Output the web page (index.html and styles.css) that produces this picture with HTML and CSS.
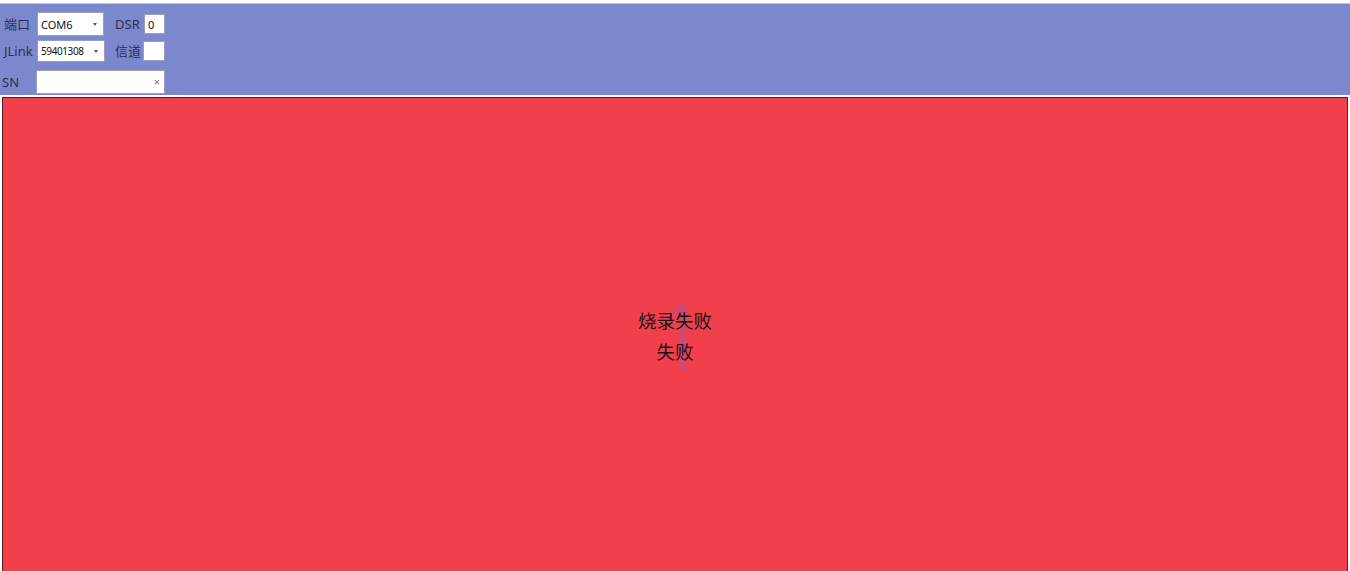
FILE: index.html
```html
<!DOCTYPE html>
<html lang="zh">
<head>
<meta charset="utf-8">
<title>烧录</title>
<link rel="stylesheet" href="styles.css">
</head>
<body>
<div class="topline"></div>
<div class="toolbar">
  <div class="grid">
    <span class="lbl">端口</span>
    <div class="combo c1"><span class="val">COM6</span><span class="arrow"></span></div>
    <span class="lbl l2">DSR</span>
    <div class="box b1"><span class="val">0</span></div>

    <span class="lbl">JLink</span>
    <div class="combo c2"><span class="val small">59401308</span><span class="arrow"></span></div>
    <span class="lbl l2">信道</span>
    <div class="box b2"></div>
  </div>
  <div class="snrow">
    <span class="lbl sn">SN</span>
    <div class="sninput"><span class="clear">×</span></div>
  </div>
</div>
<div class="panel">
  <div class="msg">
    <span class="mark" aria-hidden="true">1</span>
    <div class="text">烧录失败<br>失败</div>
  </div>
</div>
</body>
</html>
```
FILE: styles.css
```css
html, body {
  margin: 0;
  padding: 0;
  height: 100%;
  overflow: hidden;
  background: #ffffff;
  font-family: "Noto Sans", "Noto Sans CJK SC", sans-serif;
}
.topline {
  height: 3px;
  border-bottom: 1px solid #9fd9ee;
  background: #ffffff;
}
.toolbar {
  background: #7b88cd;
  height: 91px;
  box-sizing: border-box;
  padding-top: 8px;
}
.grid {
  display: grid;
  grid-template-columns: 33px 67px 11px 29px 22px;
  grid-template-rows: 24px 22px;
  row-gap: 4px;
  margin-left: 4px;
  align-items: center;
}
.lbl {
  font-size: 13px;
  color: #2b3052;
  white-space: nowrap;
  line-height: 18px;
}
.grid .lbl.l2 {
  grid-column: 4;
}
.grid .combo { grid-column: 2; }
.grid .box { grid-column: 5; }
.combo, .box, .sninput {
  background: #ffffff;
  border: 1px solid #9a9fb8;
  box-sizing: border-box;
  display: flex;
  align-items: center;
  position: relative;
}
.combo { height: 100%; padding-left: 3px; }
.c1 { width: 67px; }
.c2 { width: 68px; }
.val {
  font-size: 11px;
  color: #111111;
  font-family: "Noto Sans", sans-serif;
}
.val.small {
  font-size: 10px;
  letter-spacing: -0.4px;
}
.arrow {
  position: absolute;
  right: 6px;
  top: 50%;
  margin-top: -1px;
  width: 0;
  height: 0;
  border-left: 2px solid transparent;
  border-right: 2px solid transparent;
  border-top: 3px solid #555555;
}
.box { height: 20px; padding-left: 3px; }
.b1 { width: 21px; }
.b2 { width: 22px; margin-left: -1px; }
.snrow {
  display: flex;
  align-items: center;
  margin-top: 8px;
  height: 24px;
}
.lbl.sn {
  width: 34px;
  margin-left: 2px;
}
.sninput {
  width: 129px;
  height: 24px;
  justify-content: flex-end;
  padding-right: 4px;
}
.clear {
  font-size: 11px;
  color: #777777;
  line-height: 10px;
}
.panel {
  margin: 2px 2px 0 2px;
  height: 480px;
  background: #f13f4b;
  border: 1px solid #5a1b22;
  box-sizing: border-box;
  display: flex;
  align-items: center;
  justify-content: center;
}
.msg {
  position: relative;
  margin-top: -2px;
}
.mark {
  position: absolute;
  left: 50%;
  top: 50%;
  transform: translate(-40%, -52%);
  font-size: 92px;
  line-height: 1;
  font-weight: 400;
  color: rgba(150, 90, 190, 0.3);
  font-family: "Noto Sans", sans-serif;
  filter: blur(0.6px);
}
.text {
  position: relative;
  font-family: "Noto Sans CJK SC", sans-serif;
  font-size: 18.5px;
  line-height: 31px;
  color: #141414;
  text-align: center;
}
```
